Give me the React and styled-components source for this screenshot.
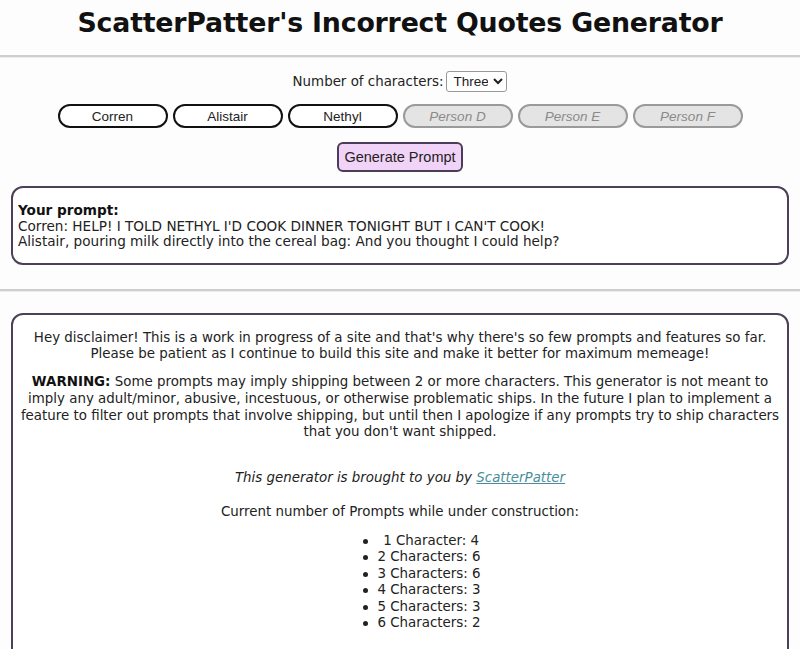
import React from "react";
import styled, { createGlobalStyle } from "styled-components";

const Global = createGlobalStyle`
  html, body { margin: 0; padding: 0; background: #fdfdfd; }
  body { font-family: "DejaVu Sans", Verdana, sans-serif; color: #222; font-size: 13.4px; }
`;

const Page = styled.div`
  display: flex;
  flex-direction: column;
`;

const Title = styled.h1`
  margin: 8px 0 17px;
  font-size: 26.8px;
  line-height: 30px;
  font-weight: bold;
  text-align: center;
  letter-spacing: -0.2px;
  color: #111;
`;

const Rule = styled.hr`
  margin: 0;
  border: 0;
  height: 2px;
  background: #cfcfcf;
  box-shadow: 0 1px 0 #ececec;
`;

const Controls = styled.div`
  display: flex;
  flex-direction: column;
  align-items: center;
  padding-top: 14px;
`;

const CountRow = styled.label`
  display: flex;
  align-items: center;
  gap: 3px;
  height: 20px;
  font-size: 13.4px;
  color: #222;
`;

const Select = styled.select`
  font-family: "Liberation Sans", Arial, sans-serif;
  font-size: 13.5px;
  height: 21px;
  width: 61px;
  padding: 0 2px;
  border: 1px solid #999;
  border-radius: 3px;
  background: #fff;
  color: #222;
`;

const PillRow = styled.div`
  display: flex;
  gap: 5px;
  margin-top: 13px;
`;

const Pill = styled.button`
  width: 110px;
  height: 24px;
  border-radius: 12px;
  border: 2px solid ${(p) => (p.disabled ? "#9a9a9a" : "#111")};
  background: ${(p) => (p.disabled ? "#e4e4e4" : "#fff")};
  color: ${(p) => (p.disabled ? "#8a8a8a" : "#222")};
  font-style: ${(p) => (p.disabled ? "italic" : "normal")};
  font-family: "Liberation Sans", Arial, sans-serif;
  font-size: 13.5px;
  padding: 0;
`;

const Generate = styled.button`
  margin-top: 14px;
  width: 126px;
  height: 30px;
  border-radius: 6px;
  border: 2px solid #4b3d5a;
  background: #f1d3f7;
  color: #222;
  font-family: "Liberation Sans", Arial, sans-serif;
  font-size: 14.5px;
  padding: 0;
`;

const Box = styled.div`
  margin: ${(p) => p.$mt}px 11px 0;
  border: 2px solid #4b4058;
  border-radius: 12px;
  background: #fff;
  padding: ${(p) => p.$pad};
  text-align: ${(p) => p.$align || "left"};
  font-size: ${(p) => p.$fs || 13.4}px;
  line-height: ${(p) => p.$lh}px;
  color: #222;
`;

const Strong = styled.b`
  color: #111;
`;

const Para = styled.p`
  margin: ${(p) => p.$m || "0"};
`;

const Link = styled.a`
  color: #4a8e9c;
  text-decoration: underline;
`;

const Center = styled.div`
  text-align: center;
`;

const List = styled.ul`
  display: inline-block;
  margin: 12px 0 0;
  padding: 0 0 0 48px;
  list-style: none;
  line-height: 16.5px;
`;

const Item = styled.li`
  display: grid;
  grid-template-columns: 5px 112px;
  column-gap: 5px;
  align-items: center;
  &::before {
    content: "";
    width: 5px;
    height: 5px;
    border-radius: 50%;
    background: #222;
  }
`;

const ItemText = styled.span`
  text-align: center;
`;

const RuleWrap = styled.div`
  margin-top: 24px;
`;

const characters = [
  { name: "Corren" },
  { name: "Alistair" },
  { name: "Nethyl" },
  { name: "Person D", off: true },
  { name: "Person E", off: true },
  { name: "Person F", off: true },
];

const counts = [
  "\u00a01 Character: 4",
  "2 Characters: 6",
  "3 Characters: 6",
  "4 Characters: 3",
  "5 Characters: 3",
  "6 Characters: 2",
];

export default function App() {
  return (
    <Page>
      <Global />
      <Title>ScatterPatter's Incorrect Quotes Generator</Title>
      <Rule />
      <Controls>
        <CountRow>
          Number of characters:
          <Select defaultValue="3">
            <option value="1">One</option>
            <option value="2">Two</option>
            <option value="3">Three</option>
            <option value="4">Four</option>
            <option value="5">Five</option>
            <option value="6">Six</option>
          </Select>
        </CountRow>
        <PillRow>
          {characters.map((c) => (
            <Pill key={c.name} disabled={c.off}>
              {c.name}
            </Pill>
          ))}
        </PillRow>
        <Generate>Generate Prompt</Generate>
      </Controls>
      <Box $mt={14} $pad="15px 5px 13px" $lh={15.5} $fs={13.6}>
        <Strong>Your prompt:</Strong>
        <br />
        Corren: HELP! I TOLD NETHYL I'D COOK DINNER TONIGHT BUT I CAN'T COOK!
        <br />
        Alistair, pouring milk directly into the cereal bag: And you thought I could help?
      </Box>
      <RuleWrap>
        <Rule />
      </RuleWrap>
      <Box $mt={22} $pad="15px 6px 40px" $lh={16.8} $align="center">
        <Para>
          Hey disclaimer! This is a work in progress of a site and that's why there's so few prompts and features so far.
          <br />
          Please be patient as I continue to build this site and make it better for maximum memeage!
        </Para>
        <Para $m="11px 0 0">
          <Strong>WARNING:</Strong> Some prompts may imply shipping between 2 or more characters. This generator is not meant to imply any adult/minor, abusive, incestuous, or otherwise problematic ships. In the future I plan to implement a feature to filter out prompts that involve shipping, but until then I apologize if any prompts try to ship characters that you don't want shipped.
        </Para>
        <Para $m="29px 0 0">
          <i>
            This generator is brought to you by <Link href="#">ScatterPatter</Link>
          </i>
        </Para>
        <Para $m="17px 0 0">Current number of Prompts while under construction:</Para>
        <Center>
          <List>
            {counts.map((t) => (
              <Item key={t}>
                <ItemText>{t}</ItemText>
              </Item>
            ))}
          </List>
        </Center>
      </Box>
    </Page>
  );
}
